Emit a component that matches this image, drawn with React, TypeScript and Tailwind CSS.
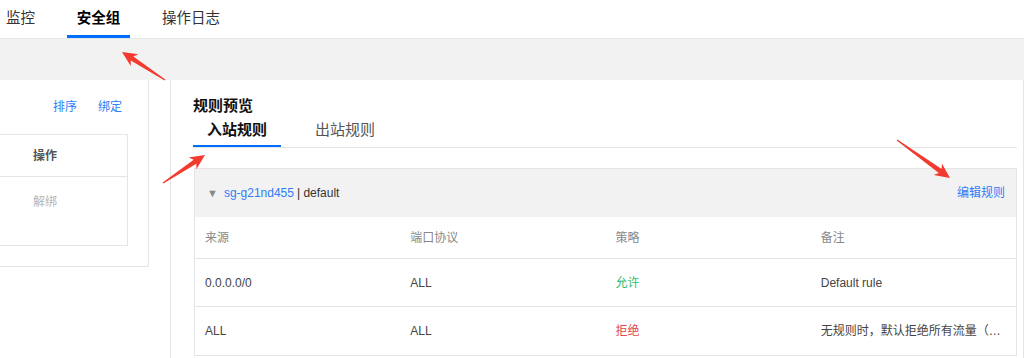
import React from 'react';

const font = { fontFamily: '"Liberation Sans", "Noto Sans CJK SC", sans-serif' };

const columns = ['来源', '端口协议', '策略', '备注'];

const rules = [
  { source: '0.0.0.0/0', port: 'ALL', policy: '允许', allow: true, note: 'Default rule' },
  { source: 'ALL', port: 'ALL', policy: '拒绝', allow: false, note: '无规则时，默认拒绝所有流量（包括内网和外网）' },
];

function arrowPoints(x1: number, y1: number, x2: number, y2: number) {
  const dx = x2 - x1;
  const dy = y2 - y1;
  const len = Math.hypot(dx, dy);
  const ux = dx / len;
  const uy = dy / len;
  const nx = -uy;
  const ny = ux;
  const at = (d: number, w: number) => [x1 + ux * d + nx * w, y1 + uy * d + ny * w];
  const pts = [
    at(0, 0.6),
    at(len - 12, 2.4),
    at(len - 15, 7),
    [x2, y2],
    at(len - 15, -7),
    at(len - 12, -2.4),
    at(0, -0.6),
  ];
  return pts.map((p) => p.join(',')).join(' ');
}

const arrows = [
  [165, 80, 122, 52],
  [163, 183, 205, 155],
  [897, 140, 950, 178],
];

function TopTabs() {
  return (
    <div className="h-[39px] border-b border-[#e5e5e5] flex items-end text-[14.5px]">
      <div className="pl-[6px] pr-[31px] w-[67px] h-[38px] flex items-center text-[#333]">监控</div>
      <div className="w-[63px] h-[38px] flex items-center justify-center font-bold text-black border-b-[3px] border-[#006eff] pt-[3px]">
        安全组
      </div>
      <div className="pl-[32px] h-[38px] flex items-center text-[#333]">操作日志</div>
    </div>
  );
}

function LeftPanel() {
  return (
    <div className="w-[149px] h-[187px] border-r border-b border-[#e5e5e5] shrink-0 flex flex-col text-[12px]">
      <div className="flex justify-end gap-[21px] pr-[26px] pt-[20px] leading-[14px] text-[#2f7df6]">
        <span>排序</span>
        <span>绑定</span>
      </div>
      <div className="mt-[20px] w-[128px] border-t border-r border-b border-[#e5e5e5]">
        <div className="h-[42px] flex items-center pl-[33px] border-b border-[#e5e5e5] font-bold text-[#555]">操作</div>
        <div className="h-[68px] pl-[33px] pt-[16px] text-[#b5b5b5]">解绑</div>
      </div>
    </div>
  );
}

function RuleTable() {
  return (
    <div className="mt-[20px] ml-px border border-[#e5e5e5] text-[12px]">
      <div className="h-[48px] bg-[#f2f2f2] flex items-center pl-[12px] pr-[11px]">
        <span className="text-[#888] text-[11px] mr-[6px]">▼</span>
        <span className="text-[#2f7df6]">sg-g21nd455</span>
        <span className="text-[#333] ml-[3px]">| default</span>
        <span className="ml-auto text-[#2f7df6]">编辑规则</span>
      </div>
      <div className="grid grid-cols-4 h-[42px] items-center border-b border-[#e5e5e5] text-[#888]">
        {columns.map((c) => (
          <div key={c} className="px-[10px]">{c}</div>
        ))}
      </div>
      {rules.map((r, i) => (
        <div
          key={i}
          className="grid grid-cols-4 h-[48px] items-center border-b border-[#e5e5e5] last:border-b-0 text-[#444]"
        >
          <div className="px-[10px]">{r.source}</div>
          <div className="px-[10px]">{r.port}</div>
          <div className={r.allow ? 'px-[10px] text-[#2dbd6e]' : 'px-[10px] text-[#e54545]'}>{r.policy}</div>
          <div className="px-[10px] truncate">{r.note}</div>
        </div>
      ))}
    </div>
  );
}

function RightPanel() {
  return (
    <div className="flex-1 h-[278px] ml-[21px] border-l border-r border-[#e5e5e5] pl-[22px] pr-[6px] pt-[16px]">
      <div className="text-[15px] font-bold leading-[20px] text-[#111]">规则预览</div>
      <div className="flex gap-[20px] border-b border-[#e5e5e5] text-[15px] leading-[20px]">
        <div className="w-[88px] text-center pt-[4px] pb-[5px] border-b-2 border-[#006eff] font-bold text-[#111]">入站规则</div>
        <div className="w-[88px] text-center pt-[4px] pb-[5px] text-[#555]">出站规则</div>
      </div>
      <RuleTable />
    </div>
  );
}

export default function App() {
  return (
    <div className="relative w-[1024px] h-[358px] overflow-hidden bg-white" style={font}>
      <TopTabs />
      <div className="h-[41px] bg-[#f2f2f2]" />
      <div className="flex items-start">
        <LeftPanel />
        <RightPanel />
      </div>
      <svg className="absolute inset-0 pointer-events-none" width="1024" height="358">
        {arrows.map(([a, b, c, d], i) => (
          <polygon key={i} points={arrowPoints(a, b, c, d)} fill="#f23a2e" />
        ))}
      </svg>
    </div>
  );
}
